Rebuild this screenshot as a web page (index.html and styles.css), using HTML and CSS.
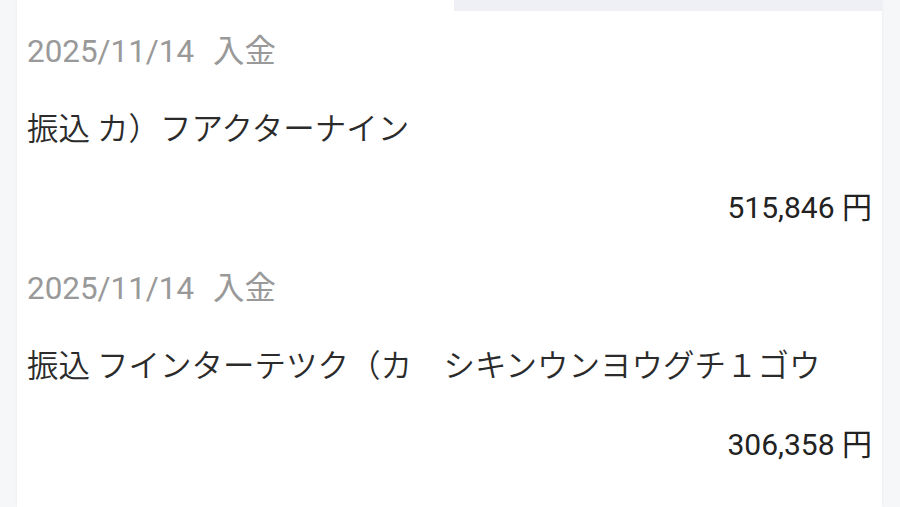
FILE: index.html
```html
<!DOCTYPE html>
<html lang="ja">
<head>
<meta charset="utf-8">
<title>入出金明細</title>
<link rel="stylesheet" href="styles.css">
</head>
<body>
<div class="card">
  <div class="tabstrip">
    <div class="tab-left"></div>
    <div class="tab-right"></div>
  </div>
  <ul class="list">
    <li class="item">
      <div class="date">2025/11/14<span class="gap"></span>入金</div>
      <div class="desc">振込 カ）フアクターナイン</div>
      <div class="amount">515,846 円</div>
    </li>
    <li class="item">
      <div class="date">2025/11/14<span class="gap"></span>入金</div>
      <div class="desc">振込 フインターテツク（カ　シキンウンヨウグチ１ゴウ</div>
      <div class="amount">306,358 円</div>
    </li>
  </ul>
</div>
</body>
</html>
```

FILE: styles.css
```css
html, body {
  margin: 0;
  padding: 0;
  height: 100%;
}
body {
  background: #f6f7f9;
  font-family: Roboto, "Noto Sans CJK JP", sans-serif;
  overflow: hidden;
}
.card {
  margin-left: 17px;
  width: 865px;
  height: 100%;
  background: #ffffff;
  box-shadow: 0 0 3px rgba(0, 0, 0, 0.06);
}
.tabstrip {
  display: flex;
  height: 11px;
}
.tab-left {
  width: 437px;
  background: #ffffff;
}
.tab-right {
  flex: 1;
  background: #eef0f6;
}
.list {
  list-style: none;
  margin: 0;
  padding: 21px 10px 0 10px;
}
.item {
  margin-bottom: 41px;
}
.date {
  font-size: 31.4px;
  line-height: 40px;
  color: #999999;
  margin-bottom: 34px;
}
.gap {
  display: inline-block;
  width: 19px;
}
.desc {
  font-family: "Noto Sans CJK JP", sans-serif;
  font-size: 31.5px;
  font-weight: 350;
  line-height: 40px;
  color: #2b2b2b;
  margin-bottom: 42px;
  white-space: nowrap;
}
.amount {
  font-size: 30px;
  line-height: 40px;
  color: #222222;
  text-align: right;
}
```
